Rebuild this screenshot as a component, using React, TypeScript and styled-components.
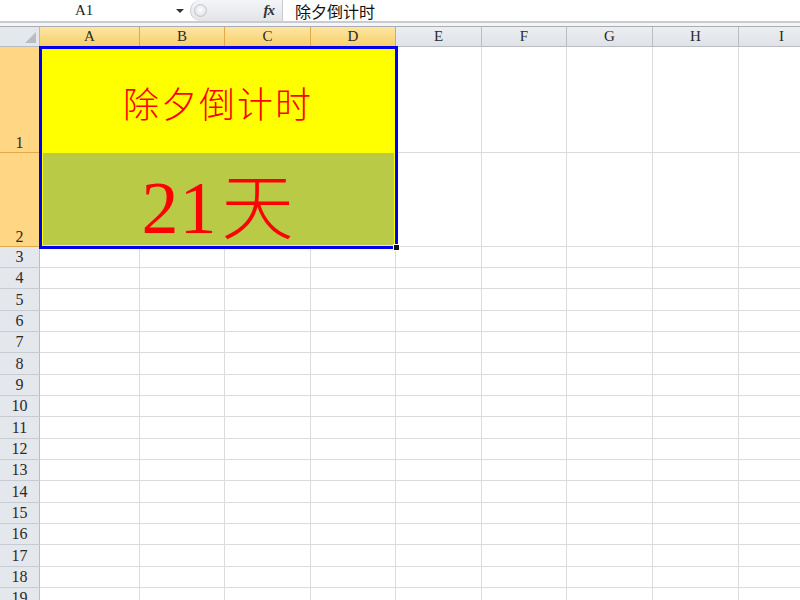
import React from 'react';
import styled, { createGlobalStyle, css } from 'styled-components';

const GlobalStyle = createGlobalStyle`
  html, body {
    margin: 0;
    padding: 0;
    background: #ffffff;
    overflow: hidden;
  }
`;

const COLS = ['A', 'B', 'C', 'D', 'E', 'F', 'G', 'H', 'I'];
const COL_WIDTHS = [100, 85, 86, 85, 86, 85, 86, 86, 86];
const SELECTED_COLS = 4;
const ROW_HEIGHTS = [106, 94];
for (let i = 3; i <= 20; i++) {
  ROW_HEIGHTS.push(i % 3 === 2 ? 22 : 21);
}

const Page = styled.div`
  width: 800px;
  height: 600px;
  overflow: hidden;
  background: #ffffff;
  font-family: 'Liberation Serif', 'DejaVu Serif', serif;
`;

const FormulaBar = styled.div`
  display: flex;
  height: 21px;
  background: #ffffff;
`;

const NameBox = styled.div`
  width: 190px;
  display: flex;
  align-items: center;
  position: relative;
  font-size: 15px;
  color: #222;
  padding-left: 75px;
  box-sizing: border-box;
`;

const DropArrow = styled.span`
  position: absolute;
  right: 6px;
  top: 9px;
  width: 0;
  height: 0;
  border-left: 4px solid transparent;
  border-right: 4px solid transparent;
  border-top: 4px solid #333;
`;

const Splitter = styled.div`
  width: 93px;
  display: flex;
  align-items: center;
  justify-content: space-between;
  background: linear-gradient(#f4f5f7, #e2e4e8);
  border-radius: 11px 0 0 11px;
  border-right: 1px solid #c8cbd0;
  border-left: 1px solid #c8cbd0;
  box-sizing: border-box;
  padding: 0 8px 0 3px;
`;

const Knob = styled.span`
  width: 13px;
  height: 13px;
  border-radius: 50%;
  background: radial-gradient(circle at 50% 45%, #ffffff 0, #e9eaec 55%, #cfd2d6 100%);
  border: 1px solid #c4c7cc;
  box-sizing: border-box;
`;

const Fx = styled.span`
  font-family: 'Liberation Serif', serif;
  font-style: italic;
  font-weight: bold;
  font-size: 15px;
  color: #333;
  letter-spacing: -1px;
`;

const FormulaInput = styled.div`
  flex: 1;
  display: flex;
  align-items: center;
  padding-left: 12px;
  font-family: 'Noto Sans CJK SC', sans-serif;
  font-size: 16px;
  color: #111;
`;

const Divider = styled.div`
  height: 3px;
  border-top: 2px solid #c9cbcf;
  border-bottom: 1px solid #a9adb3;
  background: #f4f5f7;
`;

const SheetArea = styled.div`
  position: relative;
`;

const Sheet = styled.div`
  display: grid;
  grid-template-columns: 40px ${COL_WIDTHS.map((w) => `${w}px`).join(' ')};
  grid-template-rows: 20px ${ROW_HEIGHTS.map((h) => `${h}px`).join(' ')};
`;

const Corner = styled.div`
  background: #e4e7ec;
  border-right: 1px solid #b7bcc3;
  border-bottom: 1px solid #b7bcc3;
  box-sizing: border-box;
  position: relative;

  &::after {
    content: '';
    position: absolute;
    right: 3px;
    bottom: 3px;
    width: 0;
    height: 0;
    border-left: 11px solid transparent;
    border-bottom: 11px solid #b9bdc3;
  }
`;

const ColHeader = styled.div<{ $active: boolean }>`
  display: flex;
  align-items: center;
  justify-content: center;
  font-size: 15px;
  color: #2a2a2a;
  box-sizing: border-box;
  ${(p) =>
    p.$active
      ? css`
          background: linear-gradient(#fde6a2, #f8cf6c);
          border-right: 1px solid #e1a94a;
          border-bottom: 1px solid #e1a94a;
        `
      : css`
          background: linear-gradient(#eceef1, #dfe2e7);
          border-right: 1px solid #b9bec5;
          border-bottom: 1px solid #b9bec5;
        `}
`;

const RowHeader = styled.div<{ $active: boolean }>`
  display: flex;
  justify-content: center;
  font-size: 16px;
  color: #2a2a2a;
  box-sizing: border-box;
  ${(p) =>
    p.$active
      ? css`
          background: #ffd683;
          align-items: flex-end;
          border-right: 1px solid #e1a94a;
          border-bottom: 1px solid #e1a94a;
        `
      : css`
          background: #e4e7ec;
          align-items: center;
          border-right: 1px solid #b9bec5;
          border-bottom: 1px solid #c7ccd2;
        `}
`;

const Cell = styled.div`
  border-right: 1px solid #dadcdf;
  border-bottom: 1px solid #dadcdf;
  box-sizing: border-box;
`;

const MergedCell = styled.div<{ $bg: string }>`
  grid-column: span ${SELECTED_COLS};
  background: ${(p) => p.$bg};
  display: flex;
  justify-content: center;
  align-items: center;
  color: #ff0000;
`;

const TitleText = styled.span`
  font-family: 'Noto Sans CJK SC', sans-serif;
  font-weight: 300;
  font-size: 36px;
  letter-spacing: 2px;
  padding-top: 4px;
`;

const BigText = styled.span`
  font-family: 'Liberation Serif', 'Noto Sans CJK SC', serif;
  font-size: 74px;
  line-height: 1;
  padding-top: 10px;
  letter-spacing: 1px;
`;

const DayChar = styled.span`
  font-family: 'Noto Sans CJK SC', sans-serif;
  font-weight: 300;
  font-size: 72px;
  margin-left: 4px;
`;

const Selection = styled.div`
  position: absolute;
  left: 39px;
  top: 19px;
  width: 359px;
  height: 203px;
  border: 3px solid #0000f0;
  box-shadow: inset 0 0 0 1px #ffff00;
  box-sizing: border-box;
  pointer-events: none;
`;

const FillHandle = styled.div`
  position: absolute;
  left: 393px;
  top: 217px;
  width: 7px;
  height: 7px;
  background: #111;
  border: 1px solid #ffffff;
  box-sizing: border-box;
`;

const App = () => {
  const rows: React.ReactNode[] = [];

  ROW_HEIGHTS.forEach((_, idx) => {
    const rowNo = idx + 1;
    rows.push(
      <RowHeader key={`rh${rowNo}`} $active={rowNo <= 2}>
        {rowNo}
      </RowHeader>
    );
    if (rowNo === 1) {
      rows.push(
        <MergedCell key="m1" $bg="#ffff00">
          <TitleText>除夕倒计时</TitleText>
        </MergedCell>
      );
    } else if (rowNo === 2) {
      rows.push(
        <MergedCell key="m2" $bg="#b9ca47">
          <BigText>
            21<DayChar>天</DayChar>
          </BigText>
        </MergedCell>
      );
    }
    COLS.forEach((c, ci) => {
      if (rowNo <= 2 && ci < SELECTED_COLS) return;
      rows.push(<Cell key={`${c}${rowNo}`} />);
    });
  });

  return (
    <Page>
      <GlobalStyle />
      <FormulaBar>
        <NameBox>
          A1
          <DropArrow />
        </NameBox>
        <Splitter>
          <Knob />
          <Fx>fx</Fx>
        </Splitter>
        <FormulaInput>除夕倒计时</FormulaInput>
      </FormulaBar>
      <Divider />
      <SheetArea>
        <Sheet>
          <Corner />
          {COLS.map((c, i) => (
            <ColHeader key={c} $active={i < SELECTED_COLS}>
              {c}
            </ColHeader>
          ))}
          {rows}
        </Sheet>
        <Selection />
        <FillHandle />
      </SheetArea>
    </Page>
  );
};

export default App;
